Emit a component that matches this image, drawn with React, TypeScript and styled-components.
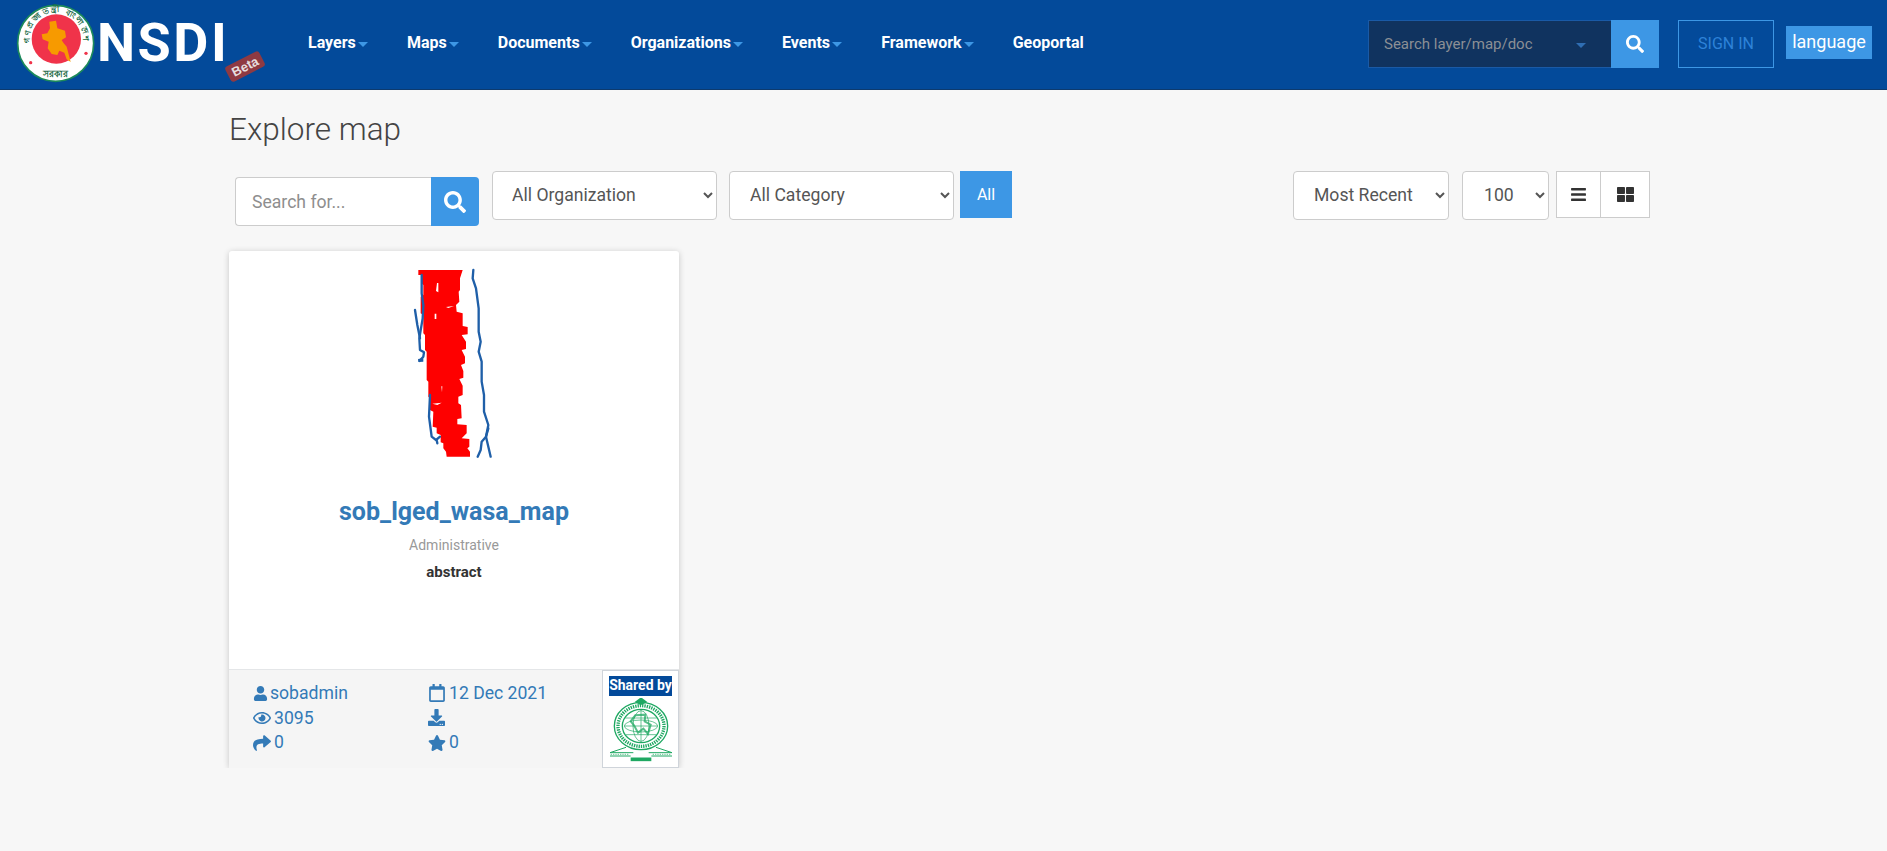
import React from "react";
import styled, { createGlobalStyle } from "styled-components";
import { FaSearch, FaBars, FaThLarge, FaUser, FaRegCalendar, FaRegEye, FaDownload, FaShare, FaStar } from "react-icons/fa";

const Global = createGlobalStyle`
  html, body { margin: 0; padding: 0; background: #f7f7f7; font-family: Roboto, "Liberation Sans", sans-serif; }
  * { box-sizing: border-box; }
`;

const Header = styled.header`
  height: 90px;
  background: #034a9a;
  border-bottom: 1px solid #0d3a6e;
  display: flex;
  align-items: flex-start;
`;
const Logo = styled.a`
  position: relative;
  display: flex;
  align-items: flex-start;
  width: 308px;
  flex: none;
`;
const LogoText = styled.span`
  margin: 10px 0 0 -13px;
  font: 700 54px/66px Roboto, sans-serif;
  letter-spacing: 2.5px;
  color: #fff;
`;
const Beta = styled.span`
  position: absolute;
  left: 226px;
  top: 58px;
  padding: 1px 5px;
  background: #8f3a42;
  border-radius: 3px;
  color: #e6dede;
  font: 700 13px/15px "Liberation Sans", sans-serif;
  transform: rotate(-27deg);
`;
const Nav = styled.nav`
  display: flex;
  gap: 39.1px;
  height: 85px;
  align-items: center;
`;
const NavItem = styled.a`
  display: flex;
  align-items: center;
  font: 700 16px/20px Roboto, sans-serif;
  color: #fff;
`;
const Caret = styled.i`
  display: block;
  width: 0;
  height: 0;
  margin: 3px 0 0 2px;
  border-left: 5px solid transparent;
  border-right: 5px solid transparent;
  border-top: 5px solid #3d97e5;
`;
const HeadRight = styled.div`
  margin-left: auto;
  margin-top: 20px;
  display: flex;
  align-items: flex-start;
  padding-right: 15px;
`;
const HeadSearch = styled.div`
  width: 243px;
  height: 48px;
  background: #10335f;
  border: 1px solid #1a5aa6;
  border-right: 0;
  display: flex;
  align-items: center;
  justify-content: space-between;
  padding: 0 25px 0 15px;
  font: 400 15px/20px Roboto, sans-serif;
  color: #8b8f95;
`;
const HeadCaret = styled.i`
  width: 0;
  height: 0;
  margin-top: 3px;
  border-left: 5px solid transparent;
  border-right: 5px solid transparent;
  border-top: 5px solid #2f6eb3;
`;
const HeadSearchBtn = styled.button`
  width: 48px;
  height: 48px;
  border: 0;
  padding: 0;
  background: #3d97e5;
  color: #fff;
  font-size: 18px;
  display: flex;
  align-items: center;
  justify-content: center;
`;
const SignIn = styled.a`
  width: 96px;
  height: 48px;
  margin-left: 19px;
  border: 1px solid #3d97e5;
  color: #2e82d8;
  font: 400 16px/45px Roboto, sans-serif;
  text-align: center;
`;
const Lang = styled.a`
  width: 86px;
  height: 33px;
  margin: 6px 0 0 12px;
  background: #3d97e5;
  color: #fff;
  font: 400 18px/32px Roboto, sans-serif;
  text-align: center;
`;

const Main = styled.main`
  width: 1429px;
  margin: 0 auto;
`;
const Title = styled.h1`
  margin: 0;
  padding-top: 20px;
  height: 81px;
  font: 300 31.5px/40px Roboto, sans-serif;
  color: #444;
`;
const Toolbar = styled.div`
  display: flex;
  justify-content: space-between;
  align-items: flex-start;
  padding: 0 8px 0 6px;
  height: 80px;
`;
const ToolGroup = styled.div<{ $gap: number }>`
  display: flex;
  align-items: flex-start;
  gap: ${(p) => p.$gap}px;
`;
const SearchGroup = styled.div`
  display: flex;
  width: 244px;
  height: 49px;
  margin: 6px 1px 0 0;
`;
const SearchInput = styled.input`
  width: 196px;
  height: 49px;
  border: 1px solid #ccc;
  border-right: 0;
  border-radius: 4px 0 0 4px;
  background: #fff;
  padding: 0 16px;
  font: 400 17.6px Roboto, sans-serif;
  &::placeholder { color: #8e8e8e; opacity: 1; }
`;
const SearchBtn = styled.button`
  width: 48px;
  height: 49px;
  border: 0;
  padding: 0;
  border-radius: 0 4px 4px 0;
  background: #3d97e5;
  color: #fff;
  font-size: 22px;
  display: flex;
  align-items: center;
  justify-content: center;
`;
const Select = styled.select<{ $w: number; $pad: number }>`
  width: ${(p) => p.$w}px;
  height: 49px;
  padding: 0 0 2px ${(p) => p.$pad}px;
  border: 1px solid #ccc;
  border-radius: 4px;
  background-color: #fff;
  color: #555;
  font: 400 17.6px Roboto, sans-serif;
`;
const AllBtn = styled.button`
  width: 52px;
  height: 47px;
  margin-left: -6px;
  border: 0;
  padding: 0;
  background: #3d97e5;
  color: #fff;
  font: 400 16px Roboto, sans-serif;
`;
const ViewGroup = styled.div`
  display: flex;
  margin-left: -6px;
`;
const ViewBtn = styled.button<{ $last?: boolean }>`
  width: ${(p) => (p.$last ? 49 : 45)}px;
  height: 47px;
  border: 1px solid #ccc;
  border-left-width: ${(p) => (p.$last ? 0 : 1)}px;
  padding: 0;
  background: #fff;
  color: #333;
  font-size: 17px;
  display: flex;
  align-items: center;
  justify-content: center;
`;
const Card = styled.article`
  width: 450px;
  height: 517px;
  background: #fff;
  border-radius: 3px;
  box-shadow: 0 1px 6px rgba(0, 0, 0, 0.2);
  display: flex;
  flex-direction: column;
`;
const Body = styled.div`
  flex: 1;
  display: flex;
  flex-direction: column;
  align-items: center;
  padding-top: 4px;
`;
const Thumb = styled.svg`
  display: block;
  width: 148px;
  height: 215px;
`;
const CardTitle = styled.a`
  margin-top: 27px;
  font: 700 25px/30px Roboto, sans-serif;
  color: #337ab7;
`;
const Category = styled.div`
  margin-top: 8px;
  font: 400 14px/20px Roboto, sans-serif;
  color: #999;
`;
const Abstract = styled.div`
  margin-top: 7px;
  font: 700 15px/20px Roboto, sans-serif;
  color: #333;
`;
const Footer = styled.footer`
  height: 99px;
  background: #f5f5f5;
  border-top: 1px solid #e4e6e8;
  display: flex;
`;
const Meta = styled.div`
  flex: 1;
  display: grid;
  grid-template-columns: 175px 1fr;
  grid-auto-rows: 24.64px;
  padding: 11px 0 0 24px;
  font: 400 17.6px/24.64px Roboto, sans-serif;
  color: #337ab7;
`;
const MetaItem = styled.div<{ $gap?: number }>`
  display: flex;
  align-items: center;
  gap: ${(p) => p.$gap ?? 3}px;
  & svg { flex: none; }
`;
const Shared = styled.div`
  width: 77px;
  background: #fff;
  border: 1px solid #cfd4da;
  padding: 5px 6px 0;
  display: flex;
  flex-direction: column;
  align-items: center;
`;
const SharedLabel = styled.div`
  width: 63px;
  height: 20px;
  background: #034a9a;
  color: #fff;
  font: 700 14px/18px Roboto, sans-serif;
  text-align: center;
  white-space: nowrap;
`;
const Emblem = styled.svg`
  display: block;
  width: 70px;
  height: 68px;
  margin-top: 2px;
`;

const nav = ["Layers", "Maps", "Documents", "Organizations", "Events", "Framework"];

const Seal = () => (
  <svg width="110" height="90" viewBox="0 0 330 270" style={{ flex: "none" }}>
    <circle cx="167" cy="130" r="114" fill="#fff" stroke="#1c8a5a" strokeWidth="5" />
    <circle cx="169" cy="117" r="74" fill="#f0334a" />
    <path d="M148 65 L168 62 L172 85 L195 92 L198 112 L185 120 L190 128 L200 140 L212 186 L200 178 L193 158 L178 152 L172 165 L155 162 L143 145 L146 125 L128 118 L125 103 L142 100 L150 85 Z" fill="#f79a00" />
    <circle cx="92" cy="188" r="5" fill="#f0334a" />
    <circle cx="258" cy="160" r="5" fill="#f0334a" />
    <path id="sealArc" d="M90 130 A80 80 0 1 1 248 130" fill="none" />
    <text fontFamily="'Noto Sans', sans-serif" fontSize="24" fill="#1c6b47" fontWeight="700">
      <textPath href="#sealArc" textLength="270">গণপ্রজাতন্ত্রী বাংলাদেশ</textPath>
    </text>
    <text x="167" y="231" textAnchor="middle" fontFamily="'Noto Sans', sans-serif" fontSize="27" fontWeight="700" fill="#1c6b47">সরকার</text>
  </svg>
);

const MapThumb = () => (
  <Thumb viewBox="0 0 444 645">
    <path
      d="M115 45 L248 45 L240 70 L240 105 L236 110 L238 140 L228 150 L230 170 L248 175 L248 213 L263 216 L263 238 L245 240 L258 260 L258 282 L245 285 L255 305 L255 325 L243 330 L250 348 L250 368 L238 372 L248 392 L248 420 L235 425 L235 445 L243 450 L245 490 L232 492 L232 508 L260 510 L260 535 L245 550 L268 552 L268 575 L262 580 L270 590 L270 605 L200 605 L198 590 L190 580 L190 565 L182 562 L182 540 L170 535 L170 518 L158 515 L160 470 L150 465 L150 430 L145 425 L145 380 L140 375 L140 290 L135 285 L135 240 L130 235 L130 180 L122 175 L122 125 L130 120 L130 90 L125 85 L125 60 L115 60 Z"
      fill="#fe0000"
    />
    <path d="M171 84 L175 84 L175 112 L168 108 Z M164 176 L169 176 L169 192 L164 192 Z M198 156 L222 153 L205 159 Z M157 446 L185 443 L172 450 Z M184 394 L187 394 L186 412 Z" fill="#fff" />
    <g fill="none" stroke="#1f5fa8" strokeWidth="7" strokeLinejoin="round" strokeLinecap="round">
      <path d="M280 45 L278 70 L288 100 L296 160 L296 230 L302 260 L296 290 L305 320 L305 380 L312 420 L312 470 L325 510 L318 545 L325 575 L332 605" />
      <path d="M325 520 L318 545 L305 560 L302 585 L293 605" />
      <path d="M125 60 L125 115 L130 150 L128 190 L118 250 L120 285 L132 292 L130 305 L118 318" />
      <path d="M105 165 L112 210 L120 250" />
      <path d="M150 420 L147 485 L155 545 L168 555 L180 545 M170 555 L172 565" />
    </g>
    <path d="M114 312 L130 310 L130 320 L116 321 Z" fill="#1f5fa8" />
  </Thumb>
);

const GovEmblem = () => (
  <Emblem viewBox="0 0 210 204">
    <g fill="none" stroke="#1fa862">
      <ellipse cx="105" cy="84" rx="80" ry="71" strokeWidth="4" />
      <ellipse cx="105" cy="84" rx="69" ry="61" strokeWidth="10" strokeDasharray="4 3" />
      <ellipse cx="105" cy="84" rx="56" ry="50" strokeWidth="4" />
      <ellipse cx="105" cy="84" rx="50" ry="18" strokeWidth="2" />
      <ellipse cx="105" cy="84" rx="24" ry="46" strokeWidth="2" />
      <path d="M58 60 H152 M55 84 H155 M60 110 H150 M105 36 V132" strokeWidth="2" />
      <path d="M88 52 L118 50 L116 70 L134 80 L126 108 L112 92 L96 104 L84 82 L74 70 Z" strokeWidth="6" strokeOpacity="0.75" />
      <path d="M12 164 L60 148 M198 164 L150 148 M12 164 H82 M198 164 H128 M12 174 H74 M198 174 H136" strokeWidth="3" />
      <path d="M14 169 H70 M140 169 H196" strokeWidth="2" strokeDasharray="4 3" />
      <path d="M74 184 H136" strokeWidth="11" />
    </g>
    <path d="M102 0 L108 0 L124 12 L108 20 L102 20 L86 12 Z" fill="#1fa862" />
  </Emblem>
);

export default function App() {
  return (
    <>
      <Global />
      <Header>
        <Logo>
          <Seal />
          <LogoText>NSDI</LogoText>
          <Beta>Beta</Beta>
        </Logo>
        <Nav>
          {nav.map((n) => (
            <NavItem key={n}>
              {n}
              <Caret />
            </NavItem>
          ))}
          <NavItem>Geoportal</NavItem>
        </Nav>
        <HeadRight>
          <HeadSearch>
            Search layer/map/doc
            <HeadCaret />
          </HeadSearch>
          <HeadSearchBtn aria-label="Search">
            <FaSearch />
          </HeadSearchBtn>
          <SignIn>SIGN IN</SignIn>
          <Lang>language</Lang>
        </HeadRight>
      </Header>
      <Main>
        <Title>Explore map</Title>
        <Toolbar>
          <ToolGroup $gap={12}>
            <SearchGroup>
              <SearchInput placeholder="Search for..." />
              <SearchBtn aria-label="Search">
                <FaSearch />
              </SearchBtn>
            </SearchGroup>
            <Select $w={225} $pad={15}>
              <option>All Organization</option>
            </Select>
            <Select $w={225} $pad={16}>
              <option>All Category</option>
            </Select>
            <AllBtn>All</AllBtn>
          </ToolGroup>
          <ToolGroup $gap={13}>
            <Select $w={156} $pad={16}>
              <option>Most Recent</option>
            </Select>
            <Select $w={87} $pad={17}>
              <option>100</option>
            </Select>
            <ViewGroup>
              <ViewBtn aria-label="List">
                <FaBars />
              </ViewBtn>
              <ViewBtn $last aria-label="Grid">
                <FaThLarge />
              </ViewBtn>
            </ViewGroup>
          </ToolGroup>
        </Toolbar>
        <Card>
          <Body>
            <MapThumb />
            <CardTitle>sob_lged_wasa_map</CardTitle>
            <Category>Administrative</Category>
            <Abstract>abstract</Abstract>
          </Body>
          <Footer>
            <Meta>
              <MetaItem $gap={2}><FaUser size={15} />sobadmin</MetaItem>
              <MetaItem><FaRegCalendar size={18} />12 Dec 2021</MetaItem>
              <MetaItem><FaRegEye size={18} />3095</MetaItem>
              <MetaItem><FaDownload size={17} /></MetaItem>
              <MetaItem><FaShare size={18} />0</MetaItem>
              <MetaItem><FaStar size={18} />0</MetaItem>
            </Meta>
            <Shared>
              <SharedLabel>Shared by</SharedLabel>
              <GovEmblem />
            </Shared>
          </Footer>
        </Card>
      </Main>
    </>
  );
}
